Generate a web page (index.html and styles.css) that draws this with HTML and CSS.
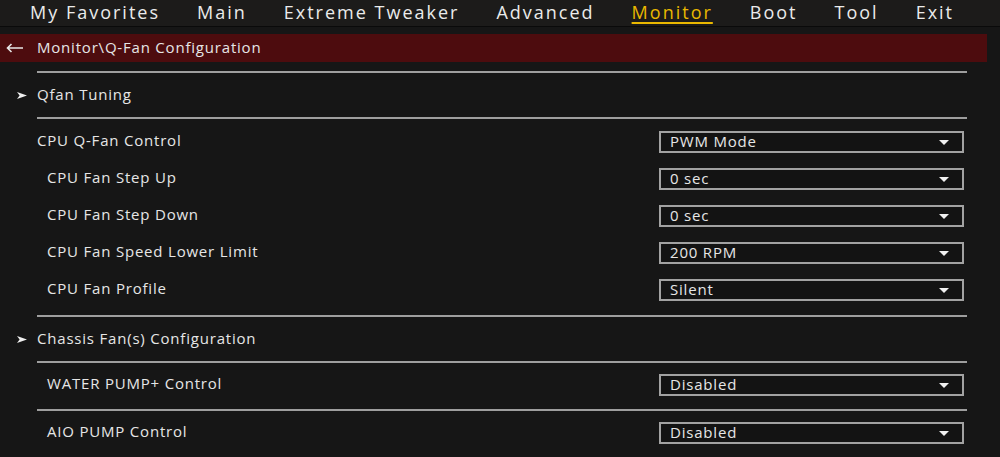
FILE: index.html
```html
<!DOCTYPE html>
<html>
<head>
    <meta charset="UTF-8">
    <title>Monitor\Q-Fan Configuration</title>
    <link rel="stylesheet" href="styles.css">
</head>
<body>

<div class="nav">
    <span>My Favorites</span>
    <span>Main</span>
    <span>Extreme Tweaker</span>
    <span>Advanced</span>
    <span class="on">Monitor</span>
    <span>Boot</span>
    <span>Tool</span>
    <span>Exit</span>
</div>

<div class="crumb">
    <svg class="back" width="18" height="10" viewBox="0 0 18 10">
        <path d="M1 5H17M5.5 1L1.5 5L5.5 9" fill="none" stroke="#e8e8e8" stroke-width="1.6"/>
    </svg>
    <span>Monitor\Q-Fan Configuration</span>
</div>

<div class="menu">
    <div class="sep"></div>
    <div class="link">
        <svg class="go" width="10" height="7" viewBox="0 0 10 7"><polygon points="0,0 10,3.5 0,7 2.6,3.5" fill="#eee"/></svg>
        <span>Qfan Tuning</span>
    </div>
    <div class="sep"></div>

    <div class="group">
        <div class="item">
            <span class="label">CPU Q-Fan Control</span>
            <div class="select">PWM Mode<i class="caret"></i></div>
        </div>
        <div class="item sub">
            <span class="label">CPU Fan Step Up</span>
            <div class="select">0 sec<i class="caret"></i></div>
        </div>
        <div class="item sub">
            <span class="label">CPU Fan Step Down</span>
            <div class="select">0 sec<i class="caret"></i></div>
        </div>
        <div class="item sub">
            <span class="label">CPU Fan Speed Lower Limit</span>
            <div class="select">200 RPM<i class="caret"></i></div>
        </div>
        <div class="item sub">
            <span class="label">CPU Fan Profile</span>
            <div class="select">Silent<i class="caret"></i></div>
        </div>
    </div>
    <div class="sep"></div>

    <div class="link">
        <svg class="go" width="10" height="7" viewBox="0 0 10 7"><polygon points="0,0 10,3.5 0,7 2.6,3.5" fill="#eee"/></svg>
        <span>Chassis Fan(s) Configuration</span>
    </div>
    <div class="sep"></div>

    <div class="item sub single">
        <span class="label">WATER PUMP+ Control</span>
        <div class="select">Disabled<i class="caret"></i></div>
    </div>
    <div class="sep"></div>

    <div class="item sub single">
        <span class="label">AIO PUMP Control</span>
        <div class="select">Disabled<i class="caret"></i></div>
    </div>
</div>

</body>
</html>
```

FILE: styles.css
```css
* {
    margin: 0;
    padding: 0;
    box-sizing: border-box;
}

body {
    background: #161616;
    color: #e6e6e6;
    font-family: "Open Sans", "Noto Sans", sans-serif;
    font-size: 15px;
    letter-spacing: 0.8px;
    overflow: hidden;
}

.nav {
    display: flex;
    gap: 37px;
    height: 27px;
    padding-left: 30px;
    background: #1c1b1a;
    border-bottom: 1px solid #0a0a0a;
    font-size: 18px;
    line-height: 24px;
    letter-spacing: 2px;
    color: #ebebeb;
}

.nav .on {
    color: #eab800;
    text-decoration: underline;
    text-decoration-thickness: 2px;
    text-underline-offset: 3px;
}

.crumb {
    display: flex;
    align-items: center;
    width: 987px;
    height: 28px;
    margin-top: 7px;
    padding-bottom: 2px;
    background: #4d0c0e;
}

.crumb .back {
    margin: 2px 13px 0 6px;
}

.menu {
    width: 967px;
    margin-top: 9px;
}

.sep {
    height: 2px;
    margin-left: 37px;
    background: #9e9e9e;
}

.link {
    display: flex;
    align-items: center;
    height: 44px;
    padding-bottom: 2px;
}

.link .go {
    margin: 2px 10px 0 17px;
}

.group {
    padding: 4px 0 7px;
}

.item {
    display: flex;
    align-items: center;
    justify-content: space-between;
    height: 37px;
    padding-left: 37px;
}

.item.sub {
    padding-left: 47px;
}

.item.single {
    height: 46px;
    padding-bottom: 3px;
}

.label {
    margin-bottom: 4px;
}

.select {
    position: relative;
    width: 305px;
    height: 22px;
    margin-right: 3px;
    padding-left: 9px;
    border: 2px solid #a2a2a2;
    background: #131313;
    line-height: 17px;
}

.caret {
    position: absolute;
    right: 13px;
    top: 7px;
    width: 0;
    height: 0;
    border-left: 5.5px solid transparent;
    border-right: 5.5px solid transparent;
    border-top: 5px solid #f0f0f0;
}
```
